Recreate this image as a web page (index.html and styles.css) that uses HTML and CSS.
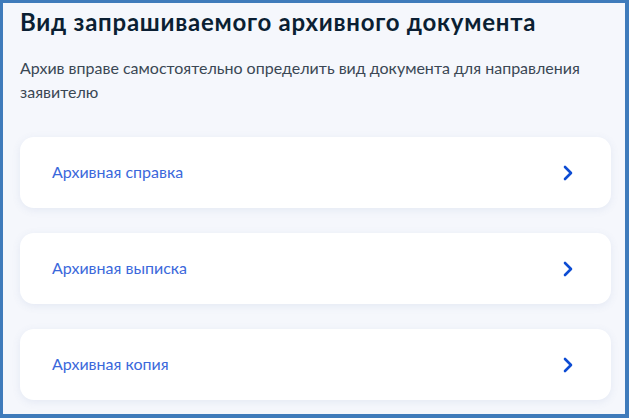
FILE: index.html
```html
<!DOCTYPE html>
<html lang="ru">
<head>
<meta charset="utf-8">
<link rel="stylesheet" href="styles.css">
</head>
<body>
<div class="frame">
  <h1 class="title">Вид запрашиваемого архивного документа</h1>
  <p class="lead">Архив вправе самостоятельно определить вид документа для направления заявителю</p>
  <div class="list">
    <a class="card" href="#"><span>Архивная справка</span><svg class="chev" viewBox="0 0 10 16" width="10" height="16"><path d="M2 2l6 6-6 6" fill="none" stroke="#0d4cd3" stroke-width="2.6" stroke-linecap="round" stroke-linejoin="round"/></svg></a>
    <a class="card" href="#"><span>Архивная выписка</span><svg class="chev" viewBox="0 0 10 16" width="10" height="16"><path d="M2 2l6 6-6 6" fill="none" stroke="#0d4cd3" stroke-width="2.6" stroke-linecap="round" stroke-linejoin="round"/></svg></a>
    <a class="card" href="#"><span>Архивная копия</span><svg class="chev" viewBox="0 0 10 16" width="10" height="16"><path d="M2 2l6 6-6 6" fill="none" stroke="#0d4cd3" stroke-width="2.6" stroke-linecap="round" stroke-linejoin="round"/></svg></a>
  </div>
</div>
</body>
</html>
```
FILE: styles.css
```css
* { box-sizing: border-box; }
html, body { margin: 0; padding: 0; }
body {
  width: 629px;
  height: 418px;
  background: #3f7bbb;
  font-family: Lato, "Noto Sans", sans-serif;
  padding: 3px 4px 4px 3px;
}
.frame {
  height: 100%;
  background: #f5f7fc;
  padding: 5px 14px 0 17px;
}
.title {
  margin: 0;
  font-size: 24px;
  font-weight: 700;
  line-height: 28px;
  letter-spacing: 0.75px;
  color: #0b1f33;
}
.lead {
  margin: 20px 0 0;
  font-size: 16px;
  line-height: 24px;
  color: #3a4754;
  max-width: 580px;
}
.list {
  margin-top: 33px;
  display: flex;
  flex-direction: column;
  gap: 25px;
}
.card {
  height: 71px;
  background: #ffffff;
  border-radius: 14px;
  box-shadow: 0 2px 8px rgba(80, 110, 170, 0.10);
  display: flex;
  align-items: center;
  justify-content: space-between;
  padding: 0 38px 0 32px;
  text-decoration: none;
  color: #3b68db;
  font-size: 16px;
}
.card span { position: relative; top: -1px; }
.chev { display: block; }
```
